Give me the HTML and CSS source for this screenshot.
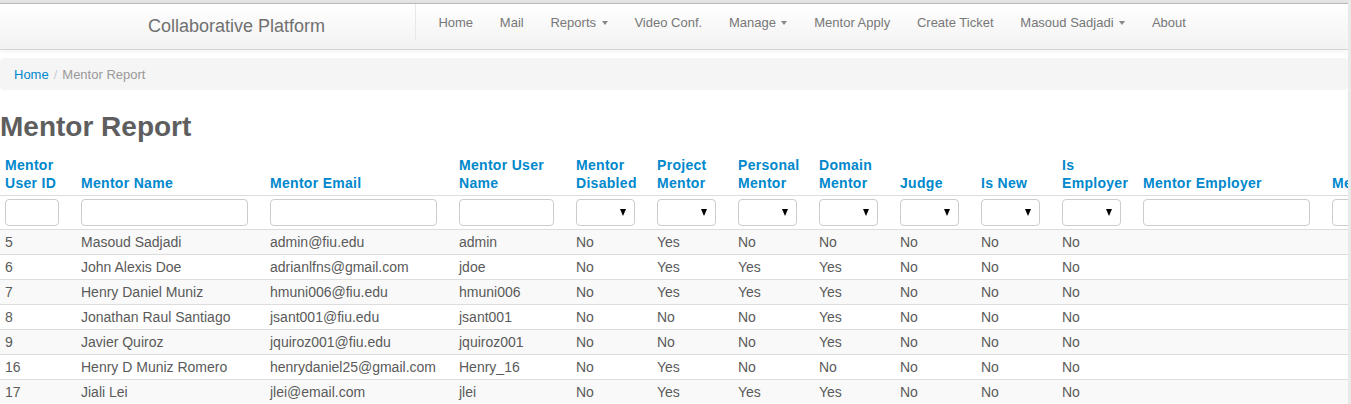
FILE: index.html
```html
<!DOCTYPE html>
<html>
<head>
<meta charset="utf-8">
<title>Mentor Report</title>
<link rel="stylesheet" href="styles.css">
</head>
<body>
<div class="page">
  <div class="topstrip"></div>
  <div class="navbar">
    <div class="brand-box"><span class="brand">Collaborative Platform</span></div>
    <ul class="nav">
      <li><a>Home</a></li>
      <li><a>Mail</a></li>
      <li><a>Reports <span class="caret"></span></a></li>
      <li><a>Video Conf.</a></li>
      <li><a>Manage <span class="caret"></span></a></li>
      <li><a>Mentor Apply</a></li>
      <li><a>Create Ticket</a></li>
      <li><a>Masoud Sadjadi <span class="caret"></span></a></li>
      <li><a>About</a></li>
    </ul>
  </div>
  <div class="breadcrumb"><a>Home</a><span class="divider">/</span><span class="active">Mentor Report</span></div>
  <h1>Mentor Report</h1>
  <div class="table-wrap">
    <table class="report">
      <colgroup>
        <col class="w76"><col class="w189"><col class="w189"><col class="w117">
        <col class="w81"><col class="w81"><col class="w81"><col class="w81"><col class="w81"><col class="w81"><col class="w81">
        <col class="w189"><col class="w189">
      </colgroup>
      <thead>
        <tr>
          <th>Mentor<br>User ID</th>
          <th>Mentor Name</th>
          <th>Mentor Email</th>
          <th>Mentor User<br>Name</th>
          <th>Mentor<br>Disabled</th>
          <th>Project<br>Mentor</th>
          <th>Personal<br>Mentor</th>
          <th>Domain<br>Mentor</th>
          <th>Judge</th>
          <th>Is New</th>
          <th>Is<br>Employer</th>
          <th>Mentor Employer</th>
          <th>Mentor Position</th>
        </tr>
      </thead>
      <tbody>
        <tr class="filters">
          <td><input type="text"></td>
          <td><input type="text"></td>
          <td><input type="text"></td>
          <td><input type="text"></td>
          <td><span class="sel"></span></td>
          <td><span class="sel"></span></td>
          <td><span class="sel"></span></td>
          <td><span class="sel"></span></td>
          <td><span class="sel"></span></td>
          <td><span class="sel"></span></td>
          <td><span class="sel"></span></td>
          <td><input type="text"></td>
          <td><input type="text"></td>
        </tr>
        <tr class="odd"><td>5</td><td>Masoud Sadjadi</td><td>admin@fiu.edu</td><td>admin</td><td>No</td><td>Yes</td><td>No</td><td>No</td><td>No</td><td>No</td><td>No</td><td></td><td></td></tr>
        <tr><td>6</td><td>John Alexis Doe</td><td>adrianlfns@gmail.com</td><td>jdoe</td><td>No</td><td>Yes</td><td>Yes</td><td>Yes</td><td>No</td><td>No</td><td>No</td><td></td><td></td></tr>
        <tr class="odd"><td>7</td><td>Henry Daniel Muniz</td><td>hmuni006@fiu.edu</td><td>hmuni006</td><td>No</td><td>Yes</td><td>Yes</td><td>Yes</td><td>No</td><td>No</td><td>No</td><td></td><td></td></tr>
        <tr><td>8</td><td>Jonathan Raul Santiago</td><td>jsant001@fiu.edu</td><td>jsant001</td><td>No</td><td>No</td><td>No</td><td>Yes</td><td>No</td><td>No</td><td>No</td><td></td><td></td></tr>
        <tr class="odd"><td>9</td><td>Javier Quiroz</td><td>jquiroz001@fiu.edu</td><td>jquiroz001</td><td>No</td><td>No</td><td>No</td><td>Yes</td><td>No</td><td>No</td><td>No</td><td></td><td></td></tr>
        <tr><td>16</td><td>Henry D Muniz Romero</td><td>henrydaniel25@gmail.com</td><td>Henry_16</td><td>No</td><td>Yes</td><td>No</td><td>No</td><td>No</td><td>No</td><td>No</td><td></td><td></td></tr>
        <tr class="odd"><td>17</td><td>Jiali Lei</td><td>jlei@email.com</td><td>jlei</td><td>No</td><td>Yes</td><td>Yes</td><td>Yes</td><td>No</td><td>No</td><td>No</td><td></td><td></td></tr>
      </tbody>
    </table>
  </div>
</div>
</body>
</html>
```
FILE: styles.css
```css
html, body {
  margin: 0;
  padding: 0;
  background: #e9e9e9;
  overflow: hidden;
}
body {
  font-family: "Liberation Sans", Arial, sans-serif;
  font-size: 14px;
  color: #555;
}
.page {
  width: 1348px;
  background: #fff;
  overflow: hidden;
}
.topstrip {
  height: 3px;
  background: #e4e4e4;
  border-bottom: 1px solid #bdbdbd;
}
.navbar {
  display: flex;
  height: 45px;
  background: linear-gradient(#ffffff, #f2f2f2);
  border-bottom: 1px solid #d4d4d4;
  box-shadow: 0 1px 5px rgba(0,0,0,0.06);
  margin-bottom: 8px;
}
.brand-box {
  width: 416px;
  height: 36px;
  border-right: 1px solid #e8e8e8;
  box-sizing: border-box;
  padding-left: 148px;
  padding-top: 11px;
}
.brand {
  font-size: 18px;
  color: #707070;
  line-height: 22px;
}
.nav {
  display: flex;
  list-style: none;
  margin: 0;
  padding: 0 0 0 9px;
}
.nav a {
  display: block;
  padding: 1px 13.4px 0;
  line-height: 36px;
  font-size: 13px;
  color: #777;
}
.caret {
  display: inline-block;
  width: 0;
  height: 0;
  margin-left: 2px;
  vertical-align: middle;
  border-top: 4px solid #888;
  border-left: 3px solid transparent;
  border-right: 3px solid transparent;
  position: relative;
  top: -1px;
}
.breadcrumb {
  height: 32px;
  line-height: 34px;
  background: #f5f5f5;
  border-radius: 4px;
  padding: 0 14px;
  font-size: 13px;
  color: #999;
}
.breadcrumb a {
  color: #0088cc;
}
.breadcrumb .divider {
  color: #ccc;
  padding: 0 5px;
}
h1 {
  margin: 21px 0 11px;
  font-size: 28px;
  line-height: 32px;
  font-weight: bold;
  color: #5e5e5e;
}
.table-wrap {
  width: 1348px;
  overflow: hidden;
}
.report {
  table-layout: fixed;
  width: 1516px;
  border-collapse: collapse;
  border-spacing: 0;
}
.w76 { width: 76px; }
.w81 { width: 81px; }
.w117 { width: 117px; }
.w189 { width: 189px; }
.report th {
  text-align: left;
  vertical-align: bottom;
  padding: 2px 17px 3px 5px;
  font-size: 14px;
  line-height: 18px;
  font-weight: bold;
  color: #0088cc;
  letter-spacing: 0.3px;
  white-space: nowrap;
  border-bottom: 1px solid #ddd;
}
.report td {
  padding: 3px 17px 3px 5px;
  line-height: 18px;
  border-top: 1px solid #ddd;
  white-space: nowrap;
  color: #5a5a5a;
  vertical-align: top;
}
.report thead + tbody tr.filters td {
  border-top: 0;
  padding: 3px 17px 2px 5px;
}
.report tr.filters td {
  height: 28px;
}
.report tr.odd td {
  background: #f9f9f9;
}
.report input {
  display: block;
  box-sizing: border-box;
  width: 100%;
  height: 27px;
  margin: 0;
  border: 1px solid #ccc;
  border-radius: 4px;
  background: #fff;
  padding: 0 4px;
}
.sel {
  display: block;
  position: relative;
  box-sizing: border-box;
  width: 100%;
  height: 27px;
  border: 1px solid #ccc;
  border-radius: 4px;
  background: #fff;
}
.sel::after {
  content: "";
  position: absolute;
  right: 8px;
  top: 9px;
  border-top: 7px solid #000;
  border-left: 3.5px solid transparent;
  border-right: 3.5px solid transparent;
}
```
